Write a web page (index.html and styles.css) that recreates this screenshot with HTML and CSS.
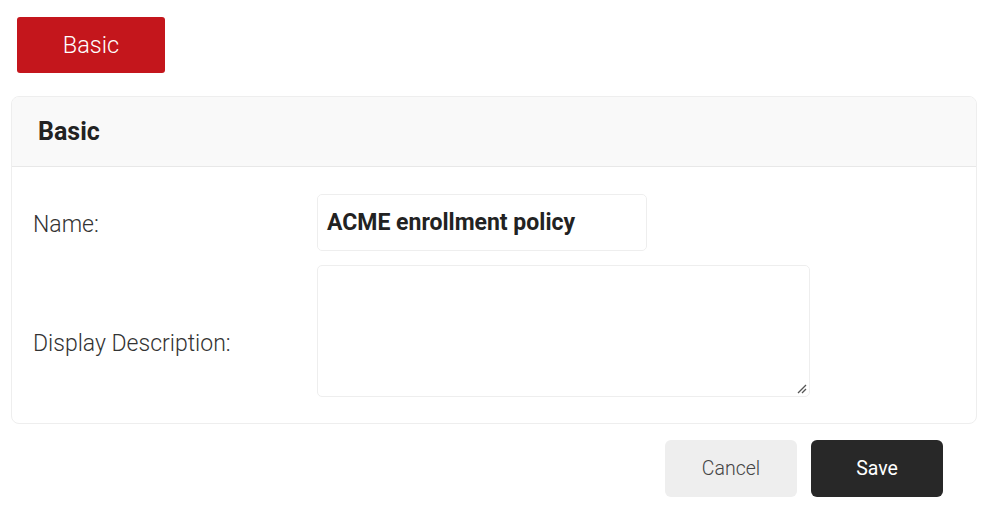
FILE: index.html
```html
<!DOCTYPE html>
<html>
<head>
<meta charset="utf-8">
<link rel="stylesheet" href="styles.css">
</head>
<body>
<div class="page">
  <div class="tabs"><button class="tab">Basic</button></div>
  <div class="card">
    <div class="card-head">Basic</div>
    <div class="card-body">
      <div class="row row-name">
        <label class="label label-name">Name:</label>
        <div class="input">ACME enrollment policy</div>
      </div>
      <div class="row row-desc">
        <label class="label label-desc">Display Description:</label>
        <div class="textarea">
          <svg class="grip" width="12" height="12" viewBox="0 0 12 12"><path d="M11 3 L3 11 M11 7 L7 11" stroke="#555" stroke-width="1.3" fill="none"/></svg>
        </div>
      </div>
    </div>
  </div>
  <div class="actions">
    <button class="btn btn-cancel">Cancel</button>
    <button class="btn btn-save">Save</button>
  </div>
</div>
</body>
</html>
```
FILE: styles.css
```css
html, body { margin: 0; padding: 0; background: #fff; }
body { font-family: Roboto, "Noto Sans", sans-serif; color: #333; }
.page { padding: 17px 14px 0 11px; width: 966px; }
.tabs { padding-left: 6px; height: 56px; margin-bottom: 23px; }
.tab {
  width: 148px; height: 56px; border: 0; border-radius: 3px;
  background: #c4161c; color: #fff; font-family: Roboto, sans-serif;
  font-weight: 300; font-size: 23.5px; padding: 0; margin: 0;
}
.card { border: 1px solid #eeeeee; border-radius: 8px; overflow: hidden; }
.card-head {
  background: #f9f9f9; border-bottom: 1px solid #e8e8e8;
  box-sizing: border-box; height: 70px; padding-left: 26px;
  display: flex; align-items: center;
  font-weight: 700; font-size: 25px; color: #222;
}
.card-body { padding: 27px 0 26px 21px; }
.row { display: flex; align-items: center; }
.row-desc { margin-top: 14px; }
.label { width: 284px; font-weight: 300; font-size: 23px; color: #333; }
.label-name { padding-top: 3px; }
.label-desc { padding-top: 24px; }
.input {
  width: 330px; height: 57px; box-sizing: border-box;
  border: 1px solid #eeeeee; border-radius: 5px;
  padding-left: 9px; display: flex; align-items: center;
  font-weight: 700; font-size: 23px; color: #222;
}
.textarea {
  width: 493px; height: 132px; box-sizing: border-box;
  border: 1px solid #eeeeee; border-radius: 5px; position: relative;
}
.grip { position: absolute; right: 2px; bottom: 2px; }
.actions { display: flex; justify-content: flex-end; gap: 14px; margin-top: 16px; padding-right: 34px; }
.btn {
  width: 132px; height: 57px; border: 0; border-radius: 6px; padding: 0; margin: 0;
  font-family: Roboto, sans-serif;
}
.btn-cancel { background: #eeeeee; color: #444; font-weight: 300; font-size: 19.5px; }
.btn-save { background: #282828; color: #fff; font-weight: 400; font-size: 19.5px; }
```
